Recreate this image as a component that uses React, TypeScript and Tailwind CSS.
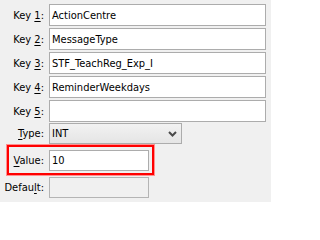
import React from "react";

const font = { fontFamily: '"DejaVu Sans Condensed", "DejaVu Sans", sans-serif' };

function Label({ pre, u, post, cls }: { pre: string; u: string; post: string; cls: string }) {
  return (
    <div className={`${cls} text-right text-[11px] text-black leading-none`}>
      {pre}
      <span className="underline underline-offset-[2px]">{u}</span>
      {post}
    </div>
  );
}

function TextBox({ value, cls }: { value: string; cls: string }) {
  return (
    <div className={`${cls} border border-[#acacac] bg-white flex items-center pl-[2px] text-[11px] text-black leading-none`}>
      {value}
    </div>
  );
}

export default function App() {
  const keys = [
    ["1", "ActionCentre"],
    ["2", "MessageType"],
    ["3", "STF_TeachReg_Exp_I"],
    ["4", "ReminderWeekdays"],
    ["5", ""],
  ];
  return (
    <div className="w-[271px] h-[202px] bg-[#f0f0f0] pt-[4px] flex flex-col" style={font}>
      {keys.map(([n, v]) => (
        <div key={n} className="flex items-center h-[22px] mb-[2px]">
          <Label pre="Key " u={n} post=":" cls="w-[44px]" />
          <TextBox value={v} cls="ml-[5px] w-[217px] h-[22px]" />
        </div>
      ))}
      <div className="flex items-center h-[21px] mt-[-1px]">
        <Label pre="" u="T" post="ype:" cls="w-[44px]" />
        <div className="ml-[5px] w-[133px] h-[21px] border border-[#acacac] bg-gradient-to-b from-[#f2f2f2] to-[#e5e5e5] flex items-center pl-[2px] text-[11px] text-black leading-none">
          <span className="flex-1">INT</span>
          <svg width="9" height="6" viewBox="0 0 9 6" className="mr-[4px]">
            <path d="M1 1 L4.5 4.5 L8 1" stroke="#4a4a4a" strokeWidth="2" fill="none" />
          </svg>
        </div>
      </div>
      <div className="ml-[7px] mt-[1px] w-[147px] h-[30px] border-2 border-[#ff0000] shadow-[0_0_0_1px_#ff9090] flex items-center">
        <Label pre="" u="V" post="alue:" cls="w-[35px]" />
        <TextBox value="10" cls="ml-[5px] w-[100px] h-[21px]" />
      </div>
      <div className="flex items-center h-[21px] mt-[2px]">
        <Label pre="Defau" u="l" post="t:" cls="w-[44px]" />
        <div className="ml-[5px] w-[100px] h-[21px] border border-[#b4b4b4] bg-[#f0f0f0]" />
      </div>
    </div>
  );
}
